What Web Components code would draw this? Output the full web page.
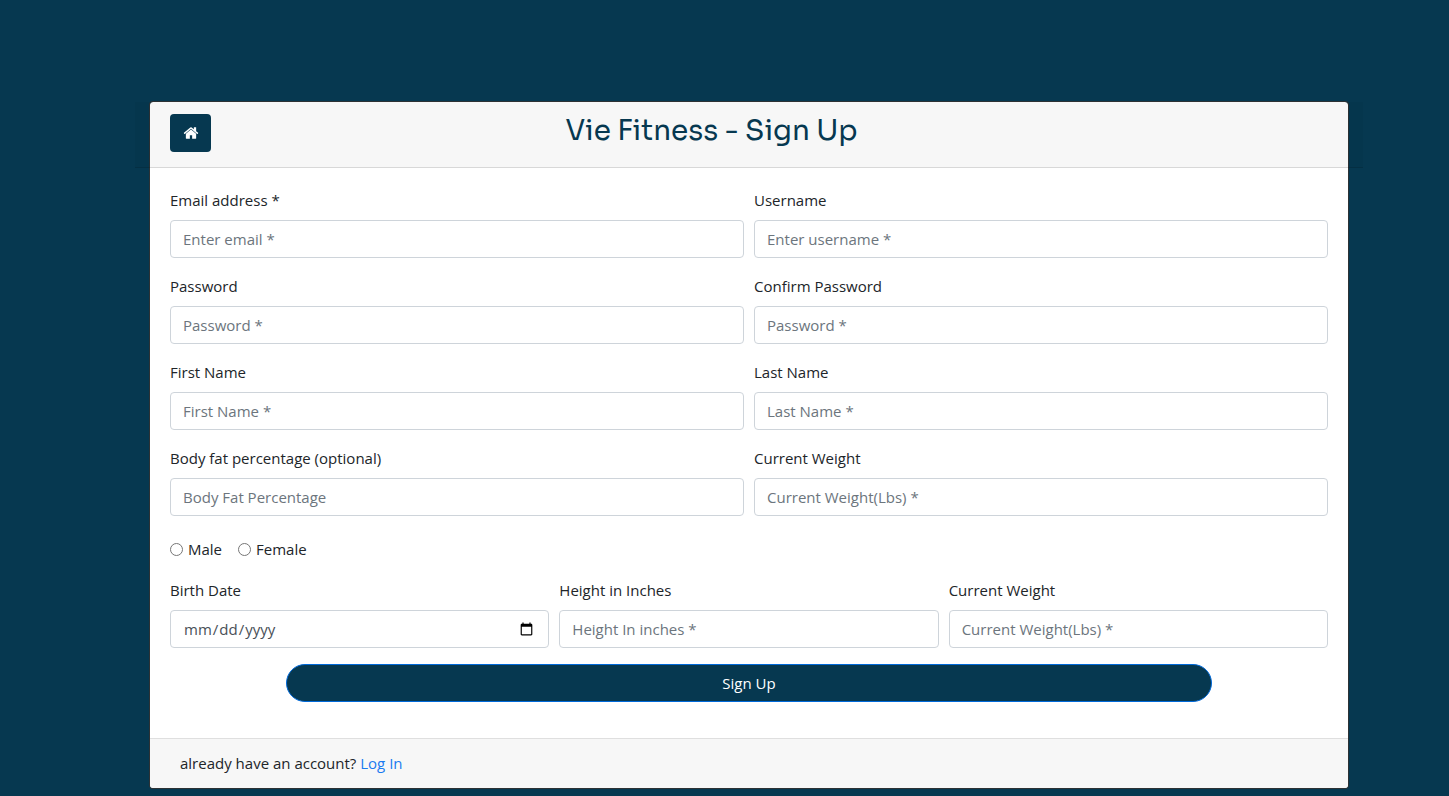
<!DOCTYPE html>
<html lang="en">
<head>
<meta charset="utf-8">
<meta name="viewport" content="width=device-width, initial-scale=1">
<title>Vie Fitness - Sign Up</title>
<style>
  html { background: #063850; }
  body {
    margin: 0;
    font: 400 15px/24px "Segoe UI", "Open Sans", "Noto Sans", sans-serif;
    color: #212529;
    --brand: #063850;
    --line: #ced4da;
  }
</style>
</head>
<body>
<signup-page></signup-page>

<script>
class BaseElement extends HTMLElement {
  constructor() {
    super();
    const root = this.attachShadow({ mode: "open" });
    const template = document.createElement("template");
    template.innerHTML = this.render();
    root.append(template.content.cloneNode(true));
  }
}

/* Card with a header, body and footer slot */
customElements.define("form-card", class extends BaseElement {
  render() {
    return `
      <style>
        :host {
          display: block;
          background: #fff;
          background-clip: padding-box;
          border: 1px solid rgba(50, 50, 50, .9);
          border-radius: 4px;
        }
        header {
          margin: 0 -15px;
          padding: 12px 35px 15px;
          background: rgba(0, 0, 0, .03);
          border-bottom: 1px solid rgba(0, 0, 0, .125);
        }
        main { padding: 20px 20px 36px; }
        footer {
          padding: 12px 30px 13px;
          background: #f7f7f7;
          border-top: 1px solid #dfdfdf;
          border-radius: 0 0 3px 3px;
        }
      </style>
      <header><slot name="header"></slot></header>
      <main><slot></slot></main>
      <footer><slot name="footer"></slot></footer>`;
  }
});

/* Home button and page title */
customElements.define("card-title", class extends BaseElement {
  render() {
    return `
      <style>
        :host { display: grid; grid-template-columns: 41px 1fr 10%; }
        button {
          height: 38px;
          padding: 0;
          display: flex;
          align-items: center;
          justify-content: center;
          border: 0;
          border-radius: 4px;
          background: var(--brand);
          color: #fff;
          cursor: pointer;
        }
        h1 {
          margin: 0;
          font: 500 28px/34px Sora, Inter, sans-serif;
          text-align: center;
          color: var(--brand);
        }
      </style>
      <button type="button" aria-label="Home">
        <svg width="16" height="16" viewBox="0 0 1792 1792" fill="currentColor" aria-hidden="true">
          <path d="M1472 992v480q0 26-19 45t-45 19h-384v-384h-256v384h-384q-26 0-45-19t-19-45v-480q0-1 .5-3t.5-3l575-474 575 474q1 2 1 6zm223-69l-62 74q-8 9-21 11h-3q-13 0-21-7l-692-577-692 577q-12 8-24 7-13-2-21-11l-62-74q-8-10-7-23.500t11-21.500l719-599q32-26 76-26t76 26l244 204v-195q0-14 9-23t23-9h192q14 0 23 9t9 23v408l219 182q10 8 11 21.500t-7 23.500z"/>
        </svg>
      </button>
      <h1><slot></slot></h1>`;
  }
});

/* Labelled text or date input */
customElements.define("form-field", class extends BaseElement {
  render() {
    return `
      <style>
        :host { display: block; min-width: 0; }
        label { display: block; margin-bottom: 8px; }
        input {
          display: block;
          box-sizing: border-box;
          width: 100%;
          height: 38px;
          padding: 6px 12px;
          border: 1px solid var(--line);
          border-radius: 4px;
          background: #fff;
          color: #495057;
          font: inherit;
        }
        input::placeholder { color: #6c757d; opacity: 1; }
        input:focus { outline: 3px solid rgba(0, 123, 255, .25); border-color: #80bdff; }
      </style>
      <label for="control"></label>
      <input id="control">`;
  }
  connectedCallback() {
    const input = this.shadowRoot.querySelector("input");
    this.shadowRoot.querySelector("label").textContent = this.getAttribute("label");
    input.type = this.getAttribute("type") || "text";
    input.placeholder = this.getAttribute("placeholder") || "";
  }
});

/* Grid row holding equal-width fields */
customElements.define("field-row", class extends BaseElement {
  render() {
    return `
      <style>
        :host {
          display: grid;
          grid-auto-flow: column;
          grid-auto-columns: minmax(0, 1fr);
          gap: 10px;
          margin-bottom: 16px;
        }
      </style>
      <slot></slot>`;
  }
});

customElements.define("gender-choice", class extends BaseElement {
  render() {
    return `
      <style>
        :host { display: flex; gap: 16px; padding: 5px 0 17px; }
        label { display: flex; align-items: center; gap: 5px; }
        input { width: 13px; height: 13px; margin: 0; }
      </style>
      <label><input type="radio" name="gender" value="male">Male</label>
      <label><input type="radio" name="gender" value="female">Female</label>`;
  }
});

customElements.define("submit-button", class extends BaseElement {
  render() {
    return `
      <style>
        :host { display: block; }
        button {
          display: block;
          width: 80%;
          height: 38px;
          margin: 0 auto;
          border: 1px solid #0069d9;
          border-radius: 24px;
          background: var(--brand);
          color: #fff;
          font: inherit;
          cursor: pointer;
        }
      </style>
      <button type="submit"><slot></slot></button>`;
  }
});

customElements.define("signup-page", class extends BaseElement {
  render() {
    return `
      <style>
        :host { display: block; padding: 101px 100px 7px 149px; }
        a { color: #1a7bf0; text-decoration: none; }
        a:hover { text-decoration: underline; }
      </style>
      <form-card>
        <card-title slot="header">Vie Fitness - Sign Up</card-title>
        <form>
          <field-row>
            <form-field label="Email address *" type="email" placeholder="Enter email *"></form-field>
            <form-field label="Username" placeholder="Enter username *"></form-field>
          </field-row>
          <field-row>
            <form-field label="Password" type="password" placeholder="Password *"></form-field>
            <form-field label="Confirm Password" type="password" placeholder="Password *"></form-field>
          </field-row>
          <field-row>
            <form-field label="First Name" placeholder="First Name *"></form-field>
            <form-field label="Last Name" placeholder="Last Name *"></form-field>
          </field-row>
          <field-row>
            <form-field label="Body fat percentage (optional)" placeholder="Body Fat Percentage"></form-field>
            <form-field label="Current Weight" placeholder="Current Weight(Lbs) *"></form-field>
          </field-row>
          <gender-choice></gender-choice>
          <field-row>
            <form-field label="Birth Date" type="date"></form-field>
            <form-field label="Height in Inches" placeholder="Height In inches *"></form-field>
            <form-field label="Current Weight" placeholder="Current Weight(Lbs) *"></form-field>
          </field-row>
          <submit-button>Sign Up</submit-button>
        </form>
        <span slot="footer">already have an account? <a href="#login">Log In</a></span>
      </form-card>`;
  }
});
</script>
</body>
</html>
